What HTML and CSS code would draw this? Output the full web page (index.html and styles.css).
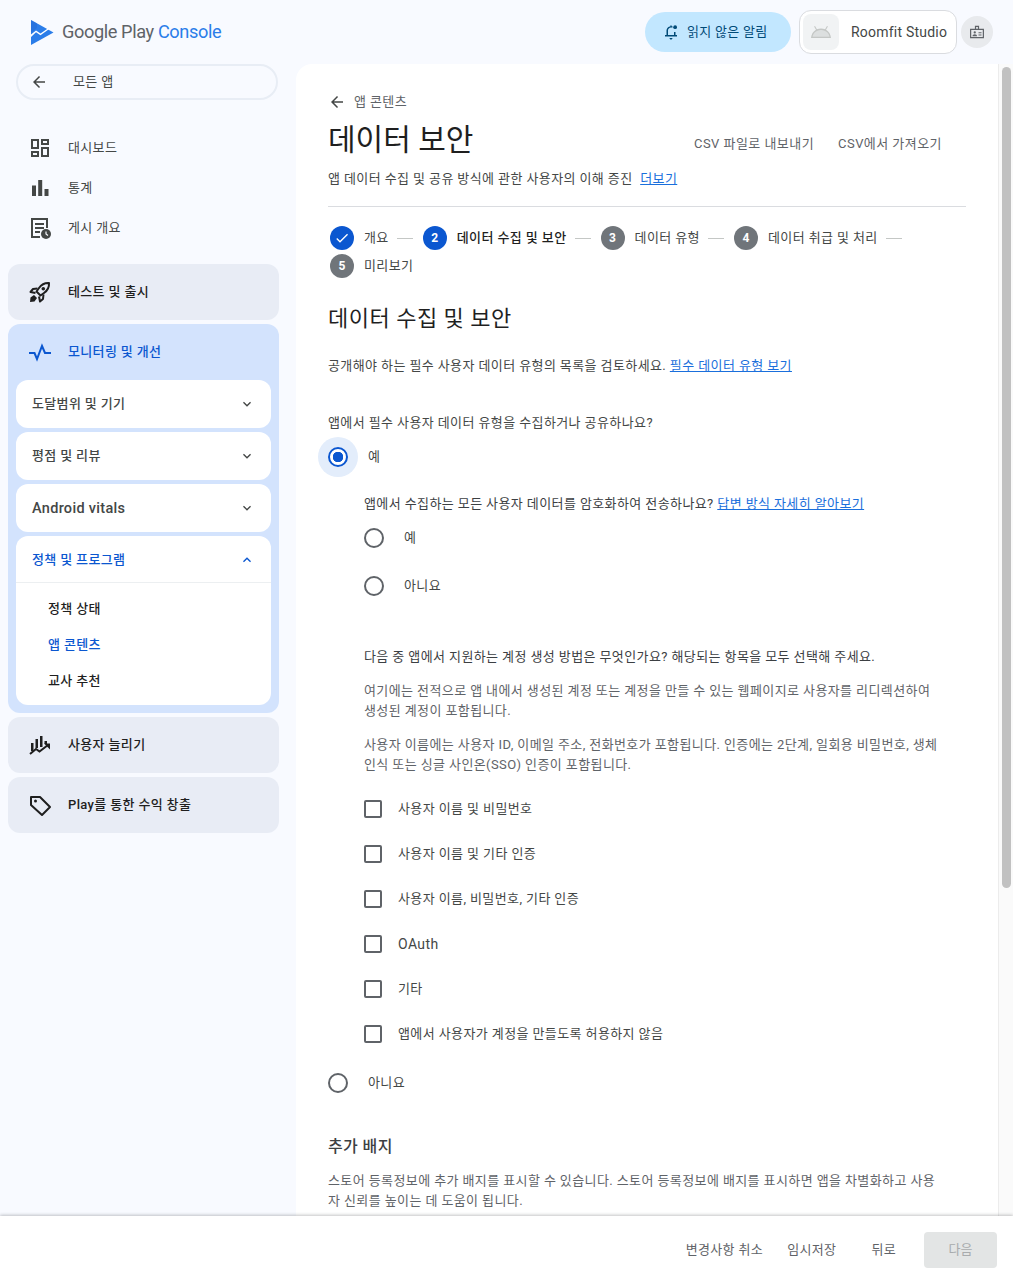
FILE: index.html
```html
<!DOCTYPE html>
<html lang="ko">
<head>
	<meta charset="utf-8">
	<title>데이터 보안</title>
	<link rel="stylesheet" href="styles.css">
</head>
<body>
<div class="app">
	<header class="top">
		<div class="logo">
			<svg class="logo-mark" viewBox="0 0 23 25" width="23" height="25"><path fill="#2b7de9" d="M0 0l22.500 12.500L0 25z"/><path fill="#fff" d="M0 14.500l5-4 4.500 3 8-5.500 1 .8-9 6.500-4.500-3L0 17z"/><path fill="#1a56c4" d="M0 0l6 3.300V8L0 12.500z" opacity=".25"/></svg>
			<span class="logo-text">Google Play <b>Console</b></span>
		</div>
		<div class="top-right">
			<div class="notify">
				<svg viewBox="0 0 24 24" width="18" height="18"><path fill="#004a77" d="M12 4.500c-.3 0-.6 0-.9.100V3.200h1.800v1c.6.100 1.100.300 1.600.600l-1 1.500c-.5-.200-1-.300-1.500-.300-2.200 0-4 1.800-4 4v6h8v-4h2v4h2v2H4v-2h2v-6c0-2.800 1.800-5 4.300-5.500zM10 20h4c0 1.100-.9 2-2 2s-2-.9-2-2z"/><circle fill="#004a77" cx="17.500" cy="5.500" r="2.500"/></svg>
				<span>읽지 않은 알림</span>
			</div>
			<div class="account">
				<div class="account-icon">
					<svg viewBox="0 0 24 24" width="24" height="24"><path fill="#c4c7c5" d="M2 18c.3-3.600 2.200-6.600 5-8.200L5.100 6.500l.9-.5 1.900 3.300C9.200 8.700 10.600 8.400 12 8.400s2.800.3 4.100.9L18 6l.9.500L17 9.800c2.800 1.600 4.700 4.600 5 8.200z"/><path fill="#f1f3f4" d="M3.500 16.800c.5-3.600 3-6.300 8.500-6.900 5.500.6 8 3.300 8.500 6.900z" opacity=".55"/></svg>
				</div>
				<span>Roomfit Studio</span>
			</div>
			<div class="avatar">
				<svg viewBox="0 0 24 24" width="18" height="18"><path fill="none" stroke="#5f6368" stroke-width="1.600" d="M3.500 8.500h17v11h-17zM10 8.500V4.500h4v4"/><path fill="none" stroke="#5f6368" stroke-width="1.400" d="M14 13h4M14 16h4"/><circle fill="#5f6368" cx="9" cy="12.500" r="1.500"/><path fill="#5f6368" d="M6 17.500c0-1.500 1.400-2.500 3-2.500s3 1 3 2.500z"/></svg>
			</div>
		</div>
	</header>

	<div class="middle">
		<nav class="side">
			<div class="all-apps">
				<svg class="icon-back" viewBox="0 0 24 24" width="18" height="18"><path d="M20 11H7.830l5.590-5.590L12 4l-8 8 8 8 1.410-1.410L7.830 13H20v-2z"/></svg>
				<span>모든 앱</span>
			</div>

			<ul class="nav-list">
				<li class="nav-item">
					<svg viewBox="0 0 24 24" width="24" height="24"><path d="M19 5v2h-4V5h4M9 5v6H5V5h4m10 8v6h-4v-6h4M9 17v2H5v-2h4M21 3h-8v6h8V3zM11 3H3v10h8V3zm10 8h-8v10h8V11zm-10 4H3v6h8v-6z"/></svg>
					<span>대시보드</span>
				</li>
				<li class="nav-item">
					<svg viewBox="0 0 24 24" width="24" height="24"><path d="M4 9.500h4V20H4zM10.200 4h4v16h-4zM16.500 13h4v7h-4z"/></svg>
					<span>통계</span>
				</li>
				<li class="nav-item">
					<svg viewBox="0 0 24 24" width="24" height="24"><path d="M3 2h17v10h-2V4H5v16h7v2H3z"/><path d="M7 7h9v2H7zM7 11h9v2H7zM7 15h5v2H7z"/><circle cx="18" cy="18" r="5"/><path fill="none" stroke="#f8faff" stroke-width="1.200" d="M18 15.500V18l2 1.500"/></svg>
					<span>게시 개요</span>
				</li>
			</ul>

			<div class="group">
				<svg viewBox="0 0 24 24" width="24" height="24"><path fill="none" stroke="#1f1f1f" stroke-width="2" stroke-linejoin="round" d="M21 3c-4-.3-7.500 1.500-10 5l-2.500 3.500 4 4L16 13c3.500-2.500 5.300-6 5-10z"/><circle cx="15.300" cy="8.700" r="1.800"/><path fill="none" stroke="#1f1f1f" stroke-width="2" stroke-linejoin="round" d="M9.500 8.500l-4.500.5L2.500 12l5 1M15.500 14.500l-.5 4.500-3 2.500-1-5"/><path d="M6 15l3 3-2.500 3.500L2 22l.5-4.500z"/></svg>
				<span>테스트 및 출시</span>
			</div>

			<div class="group group-open">
				<div class="group-head">
					<svg viewBox="0 0 24 24" width="24" height="24"><path fill="none" stroke="#0b57d0" stroke-width="2" d="M1 13h5.500l2.500 6 5-13 3 7h6"/></svg>
					<span>모니터링 및 개선</span>
				</div>
				<div class="card">
					<div class="card-head"><span>도달범위 및 기기</span><svg viewBox="0 0 24 24" width="18" height="18"><path d="M16.590 8.590L12 13.170 7.410 8.590 6 10l6 6 6-6z"/></svg></div>
				</div>
				<div class="card">
					<div class="card-head"><span>평점 및 리뷰</span><svg viewBox="0 0 24 24" width="18" height="18"><path d="M16.590 8.590L12 13.170 7.410 8.590 6 10l6 6 6-6z"/></svg></div>
				</div>
				<div class="card">
					<div class="card-head"><span class="card-latin">Android vitals</span><svg viewBox="0 0 24 24" width="18" height="18"><path d="M16.590 8.590L12 13.170 7.410 8.590 6 10l6 6 6-6z"/></svg></div>
				</div>
				<div class="card">
					<div class="card-head card-head-open"><span>정책 및 프로그램</span><svg viewBox="0 0 24 24" width="18" height="18"><path d="M12 8l-6 6 1.410 1.410L12 10.830l4.590 4.580L18 14z"/></svg></div>
					<ul class="sub-list">
						<li>정책 상태</li>
						<li class="sub-active">앱 콘텐츠</li>
						<li>교사 추천</li>
					</ul>
				</div>
			</div>

			<div class="group">
				<svg viewBox="0 0 24 24" width="24" height="24"><path d="M3 10h2.500v8H3zM7.500 6H10v9H7.500zM12 3h2.500v11H12zM16.500 8H19v3h-2.500z"/><path fill="none" stroke="#1f1f1f" stroke-width="2" d="M2 21l6-5 3.500 2.500L20 12"/><path d="M16 10.500h6v6z"/></svg>
				<span>사용자 늘리기</span>
			</div>

			<div class="group">
				<svg viewBox="0 0 24 24" width="24" height="24"><path fill="none" stroke="#1f1f1f" stroke-width="2" stroke-linejoin="round" d="M3 4h9l10 10-8 8L3 12z"/><circle cx="7.500" cy="8" r="1.500"/></svg>
				<span>Play를 통한 수익 창출</span>
			</div>
		</nav>

		<main class="panel">
			<div class="content">
				<div class="crumb">
					<svg viewBox="0 0 24 24" width="18" height="18"><path d="M20 11H7.830l5.590-5.590L12 4l-8 8 8 8 1.410-1.410L7.830 13H20v-2z"/></svg>
					<span>앱 콘텐츠</span>
				</div>
				<div class="title-row">
					<h1>데이터 보안</h1>
					<div class="title-actions">
						<span>CSV 파일로 내보내기</span>
						<span>CSV에서 가져오기</span>
					</div>
				</div>
				<p class="sub-title">앱 데이터 수집 및 공유 방식에 관한 사용자의 이해 증진 <a class="more">더보기</a></p>

				<ol class="steps">
					<li class="step step-done">
						<i class="step-num"><svg viewBox="0 0 24 24" width="16" height="16"><path fill="#fff" d="M9 16.170L4.830 12l-1.420 1.410L9 19 21 7l-1.410-1.410z"/></svg></i>
						<span>개요</span><b class="step-line"></b>
					</li>
					<li class="step step-now">
						<i class="step-num">2</i><span>데이터 수집 및 보안</span><b class="step-line"></b>
					</li>
					<li class="step">
						<i class="step-num">3</i><span>데이터 유형</span><b class="step-line"></b>
					</li>
					<li class="step">
						<i class="step-num">4</i><span>데이터 취급 및 처리</span><b class="step-line"></b>
					</li>
					<li class="step">
						<i class="step-num">5</i><span>미리보기</span>
					</li>
				</ol>

				<h2>데이터 수집 및 보안</h2>
				<p class="intro">공개해야 하는 필수 사용자 데이터 유형의 목록을 검토하세요. <a>필수 데이터 유형 보기</a></p>

				<p class="question">앱에서 필수 사용자 데이터 유형을 수집하거나 공유하나요?</p>
				<div class="radio-row radio-on">
					<i class="radio"></i><span>예</span>
				</div>

				<div class="nested">
					<p class="nested-q">앱에서 수집하는 모든 사용자 데이터를 암호화하여 전송하나요? <a>답변 방식 자세히 알아보기</a></p>
					<div class="radio-row radio-plain"><i class="radio"></i><span>예</span></div>
					<div class="radio-row radio-plain"><i class="radio"></i><span>아니요</span></div>

					<p class="nested-q account-q">다음 중 앱에서 지원하는 계정 생성 방법은 무엇인가요? 해당되는 항목을 모두 선택해 주세요.</p>
					<p class="note">여기에는 전적으로 앱 내에서 생성된 계정 또는 계정을 만들 수 있는 웹페이지로 사용자를 리디렉션하여 생성된 계정이 포함됩니다.</p>
					<p class="note">사용자 이름에는 사용자 ID, 이메일 주소, 전화번호가 포함됩니다. 인증에는 2단계, 일회용 비밀번호, 생체 인식 또는 싱글 사인온(SSO) 인증이 포함됩니다.</p>

					<ul class="checks">
						<li><i class="check"></i>사용자 이름 및 비밀번호</li>
						<li><i class="check"></i>사용자 이름 및 기타 인증</li>
						<li><i class="check"></i>사용자 이름, 비밀번호, 기타 인증</li>
						<li><i class="check"></i><span class="check-latin">OAuth</span></li>
						<li><i class="check"></i>기타</li>
						<li><i class="check"></i>앱에서 사용자가 계정을 만들도록 허용하지 않음</li>
					</ul>
				</div>

				<div class="radio-row radio-plain radio-last"><i class="radio"></i><span>아니요</span></div>

				<h3>추가 배지</h3>
				<p class="note badge-note">스토어 등록정보에 추가 배지를 표시할 수 있습니다. 스토어 등록정보에 배지를 표시하면 앱을 차별화하고 사용자 신뢰를 높이는 데 도움이 됩니다.</p>
			</div>
			<div class="scroll-track"><div class="scroll-thumb"></div></div>
		</main>
	</div>

	<footer class="foot">
		<span>변경사항 취소</span>
		<span>임시저장</span>
		<span class="foot-back">뒤로</span>
		<button class="next" disabled>다음</button>
	</footer>
</div>
</body>
</html>
```

FILE: styles.css
```css
* { box-sizing: border-box; }
html, body { margin: 0; height: 100%; }
body { font: 13px/20px Roboto, "Noto Sans CJK KR", sans-serif; letter-spacing: .4px; color: #444746; background: #f8faff; overflow: hidden; }
ul, ol { margin: 0; padding: 0; list-style: none; }
p { margin: 0; }
i { font-style: normal; }
svg { display: block; flex: none; }
a { color: #1a6fdc; text-decoration: underline; }

.app { display: flex; flex-direction: column; height: 100vh; }

/* top bar */
.top { display: flex; justify-content: space-between; align-items: center; height: 64px; flex: none; padding: 0 20px 0 31px; }
.logo { display: flex; align-items: center; gap: 8px; }
.logo-text { font-size: 18.200px; letter-spacing: -.4px; color: #5f6368; }
.logo-text b { font-weight: 400; color: #2b7de9; }
.top-right { display: flex; align-items: center; }
.notify { display: flex; align-items: center; gap: 7px; width: 146px; height: 40px; padding-left: 17px; margin-right: 8px; border-radius: 20px; background: #c2e7ff; color: #004a77; letter-spacing: .3px; }
.account { display: flex; align-items: center; gap: 12px; width: 158px; height: 44px; padding-left: 3px; margin-right: 4px; border: 1px solid #dadce0; border-radius: 12px; background: #fff; font-size: 14px; letter-spacing: .22px; }
.account-icon { display: flex; align-items: center; justify-content: center; width: 36px; height: 36px; border-radius: 8px; background: #f1f3f4; }
.avatar { display: flex; align-items: center; justify-content: center; width: 32px; height: 32px; border-radius: 50%; background: #e8eaed; }

.middle { display: flex; flex: 1; min-height: 0; }

/* side nav */
.side { width: 296px; flex: none; padding: 0 17px 0 8px; letter-spacing: .35px; }
.all-apps { display: flex; align-items: center; gap: 25px; height: 36px; margin: 0 1px 0 8px; padding-left: 12px; border: 2px solid #e8edf5; border-radius: 18px; }
.icon-back { fill: #444746; }
.nav-list { margin: 28px 0 16px; }
.nav-item { display: flex; align-items: center; gap: 16px; height: 40px; padding-left: 20px; }
.nav-item svg { fill: #444746; }
.group { display: flex; align-items: center; gap: 16px; height: 56px; margin-bottom: 4px; padding-left: 20px; border-radius: 12px; background: #e8ecf5; color: #1f1f1f; font-weight: 500; }
.group svg { fill: #1f1f1f; }
.group-open { display: block; height: auto; padding: 0 8px 8px; background: #d3e3fd; }
.group-head { display: flex; align-items: center; gap: 16px; height: 56px; padding-left: 12px; color: #0b57d0; }
.card { margin-bottom: 4px; border-radius: 12px; background: #fff; overflow: hidden; }
.card:last-child { margin-bottom: 0; }
.card-head { display: flex; align-items: center; justify-content: space-between; height: 48px; padding: 0 16px; color: #444746; font-weight: 500; }
.card-head svg { fill: #444746; width: 16px; height: 16px; }
.card-latin { padding-top: 1px; font-size: 14.500px; letter-spacing: .3px; }
.card-head-open { height: 47px; padding-top: 1px; border-bottom: 1px solid #eceff1; color: #0b57d0; }
.card-head-open svg { fill: #0b57d0; }
.sub-list { padding: 8px 0 6px 32px; }
.sub-list li { height: 36px; line-height: 36px; }
.sub-active { color: #0b57d0; font-weight: 500; }

/* main panel */
.panel { position: relative; flex: 1; min-width: 0; overflow: hidden; background: #fff; border-radius: 16px 0 0 0; }
.content { width: 702px; padding: 28px 32px 0; }
.scroll-track { position: absolute; top: 0; right: 0; bottom: 0; width: 15px; background: #fafafa; border-left: 1px solid #ececec; }
.scroll-thumb { width: 9px; height: 821px; margin: 3px 0 0 3px; border-radius: 5px; background: #c1c1c1; }

.crumb { display: flex; align-items: center; gap: 8px; height: 20px; color: #5f6368; }
.crumb svg { fill: #444746; }
.title-row { display: flex; justify-content: space-between; align-items: center; height: 44px; margin-top: 6px; }
h1 { margin: 0; font-size: 30px; line-height: 44px; font-weight: 400; letter-spacing: 0; color: #1f1f1f; }
.title-actions { display: flex; gap: 24px; padding: 8px 24px 0 0; letter-spacing: .45px; color: #5f6368; }
.sub-title { margin-top: 7px; padding-bottom: 17px; border-bottom: 1px solid #dadce0; }
.more { margin-left: 4px; }

.steps { display: flex; flex-wrap: wrap; margin: 17px 0 0 2px; }
.step { display: flex; align-items: center; height: 28px; }
.step-num { display: flex; align-items: center; justify-content: center; width: 24px; height: 24px; margin-right: 10px; border-radius: 50%; background: #70757a; color: #fff; font-size: 12px; font-weight: 700; letter-spacing: 0; }
.step-done .step-num, .step-now .step-num { background: #0b57d0; }
.step-now span { color: #1f1f1f; font-weight: 500; }
.step-line { width: 16px; height: 1px; margin: 0 10px 0 8px; background: #c4c7c5; }

h2 { margin: 23px 0 0; font-size: 22px; line-height: 32px; font-weight: 400; letter-spacing: .5px; color: #1f1f1f; }
.intro { margin-top: 21px; }
.question { margin-top: 37px; }
.radio-row { display: flex; align-items: center; gap: 20px; }
.radio { display: block; flex: none; width: 20px; height: 20px; border: 2px solid #5f6368; border-radius: 50%; }
.radio-on { height: 40px; margin: 4px 0 0 -10px; }
.radio-on .radio { margin-left: 10px; border-color: #0b57d0; box-shadow: 0 0 0 10px #e3edfb; background: radial-gradient(circle, #0b57d0 5px, #fff 5.500px); }
.radio-plain { height: 48px; }
.nested { padding-left: 36px; }
.nested-q { margin-top: 17px; color: #3c4043; }
.account-q { margin-top: 37px; }
.note { margin-top: 14px; max-width: 578px; color: #5f6368; }
.checks { margin-top: 11px; }
.checks li { display: flex; align-items: center; gap: 16px; height: 45px; }
.check { display: block; flex: none; width: 18px; height: 18px; border: 2px solid #5f6368; border-radius: 2px; }
.check-latin { font-size: 14px; }
.radio-last { margin-top: 3px; }
h3 { margin: 28px 0 0; font-size: 16px; line-height: 24px; font-weight: 500; color: #3c4043; }
.badge-note { margin-top: 12px; max-width: 614px; }

/* bottom bar */
.foot { position: relative; display: flex; align-items: center; justify-content: flex-end; height: 68px; flex: none; gap: 24px; padding-right: 16px; background: #fff; box-shadow: 0 -1px 3px rgba(60, 64, 67, .3); color: #5f6368; letter-spacing: .35px; }
.foot-back { margin-left: 11px; }
.next { width: 73px; height: 36px; margin-left: 4px; border: 0; border-radius: 4px; background: #e3e5e5; color: #a8abad; font: inherit; }
```
